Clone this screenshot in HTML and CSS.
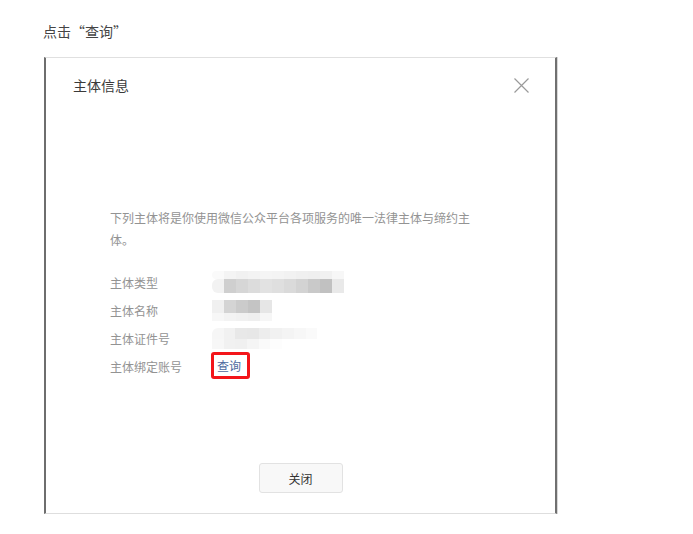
FILE: index.html
```html
<!DOCTYPE html>
<html lang="zh-CN">
<head>
<meta charset="utf-8">
<title>主体信息</title>
<link rel="stylesheet" href="styles.css">
</head>
<body>
<p class="step">点击“查询”</p>
<div class="dialog">
  <div class="dialog-head">
    <span class="dialog-title">主体信息</span>
    <svg class="close" width="15" height="15" viewBox="0 0 15 15"><path d="M0.5 0.5L14.5 14.5M14.5 0.5L0.5 14.5" stroke="#9a9a9a" stroke-width="1.2" fill="none"/></svg>
  </div>
  <div class="dialog-body">
    <p class="intro">下列主体将是你使用微信公众平台各项服务的唯一法律主体与缔约主体。</p>
    <div class="rows">
      <div class="row">
        <span class="label">主体类型</span>
        <div class="mosaic m1">
          <div class="strip s-top">
            <i style="background:#fafafa"></i><i style="background:#f4f4f4"></i><i style="background:#f1f1f1"></i><i style="background:#f3f3f3"></i><i style="background:#f5f5f5"></i><i style="background:#f4f4f4"></i><i style="background:#f2f2f2"></i><i style="background:#f0f0f0"></i><i style="background:#efefef"></i><i style="background:#f1f1f1"></i><i style="background:#f7f7f7"></i>
          </div>
          <div class="strip s-main">
            <i style="background:#f2f2f2"></i><i style="background:#cfcfcf"></i><i style="background:#d6d6d6"></i><i style="background:#dcdcdc"></i><i style="background:#e2e2e2"></i><i style="background:#dfdfdf"></i><i style="background:#dadada"></i><i style="background:#d3d3d3"></i><i style="background:#c9c9c9"></i><i style="background:#c1c1c1"></i><i style="background:#e9e9e9"></i>
          </div>
        </div>
      </div>
      <div class="row">
        <span class="label">主体名称</span>
        <div class="mosaic m2">
          <div class="strip s-main2">
            <i style="background:#f0f0f0"></i><i style="background:#d4d4d4"></i><i style="background:#cbcbcb"></i><i style="background:#c4c4c4"></i><i style="background:#e6e6e6"></i>
          </div>
          <div class="strip s-bot">
            <i style="background:#f7f7f7"></i><i style="background:#f3f3f3"></i><i style="background:#f1f1f1"></i><i style="background:#efefef"></i><i style="background:#f6f6f6"></i>
          </div>
        </div>
      </div>
      <div class="row">
        <span class="label">主体证件号</span>
        <div class="mosaic m3">
          <div class="strip s-top3">
            <i style="background:#f6f6f6"></i><i style="background:#f1f1f1"></i><i style="background:#e8e8e8"></i><i style="background:#e7e7e7"></i><i style="background:#ededed"></i><i style="background:#f1f1f1"></i><i style="background:#f4f4f4"></i><i style="background:#f7f7f7"></i><i style="background:#fafafa"></i>
          </div>
          <div class="strip s-bot3">
            <i style="background:#f7f7f7"></i><i style="background:#f1f1f1"></i><i style="background:#f0f0f0"></i><i style="background:#f5f5f5"></i><i style="background:#fafafa"></i><i style="background:#fdfdfd"></i><i style="background:#fff"></i><i style="background:#fff"></i><i style="background:#fff"></i>
          </div>
        </div>
      </div>
      <div class="row">
        <span class="label">主体绑定账号</span>
        <span class="mark"><a class="query">查询</a></span>
      </div>
    </div>
    <div class="actions">
      <button class="btn">关闭</button>
    </div>
  </div>
</div>
</body>
</html>
```
FILE: styles.css
```css
html, body {
  margin: 0;
  padding: 0;
  background: #fff;
}
body {
  font-family: "Noto Sans CJK SC", "Noto Sans", sans-serif;
  width: 693px;
  height: 534px;
  overflow: hidden;
}
.step {
  margin: 21px 0 0 43px;
  font-size: 14px;
  line-height: 20px;
  color: #444;
}
.dialog {
  margin: 16px 0 0 44px;
  width: 509px;
  border-top: 1px solid #e0e0e0;
  border-bottom: 1px solid #dedede;
  border-left: 2px solid #6e6e6e;
  border-right: 2px solid #707070;
  box-shadow: 1px 0 0 #d8d8d8;
}
.dialog-head {
  display: flex;
  justify-content: space-between;
  align-items: center;
  padding: 17px 26px 0 27px;
  height: 20px;
}
.dialog-title {
  font-size: 14px;
  line-height: 20px;
  color: #3a3a3a;
}
.close {
  display: block;
}
.dialog-body {
  padding: 112px 0 20px 64px;
}
.intro {
  margin: 0;
  width: 366px;
  font-size: 12px;
  line-height: 22px;
  color: #939393;
}
.rows {
  margin-top: 17px;
}
.row {
  display: flex;
  align-items: center;
  height: 28px;
}
.label {
  width: 102px;
  font-size: 12px;
  color: #939393;
}
.mosaic {
  display: flex;
  flex-direction: column;
  filter: blur(0.6px);
}
.strip {
  display: flex;
}
.strip i {
  display: block;
  width: 12px;
  flex: none;
}
.s-top i { height: 8px; }
.s-main i { height: 14px; }
.m1 .strip i:first-child { border-radius: 6px 0 0 6px; }
.s-main2 i { height: 13px; }
.s-bot i { height: 8px; }
.m3 .strip i { width: 11.7px; }
.s-top3 i { height: 11px; }
.s-bot3 i { height: 10px; }
.m3 .s-top3 i:first-child { border-radius: 6px 0 0 0; }
.mark {
  display: inline-flex;
  align-items: center;
  box-sizing: border-box;
  height: 27px;
  margin: -1px 0 0 -1px;
  padding: 0 6px 0 3px;
  border: 3px solid #f3151a;
  border-radius: 3px;
}
.query {
  font-size: 12px;
  line-height: 16px;
  color: #4f6a9e;
}
.actions {
  display: flex;
  justify-content: center;
  margin: 83px 0 0 -64px;
}
.btn {
  width: 84px;
  height: 30px;
  border: 1px solid #e2e2e2;
  border-radius: 3px;
  background: #f8f8f8;
  font-family: "Noto Sans CJK SC", "Noto Sans", sans-serif;
  font-size: 12px;
  color: #333;
  padding: 0;
}
```
